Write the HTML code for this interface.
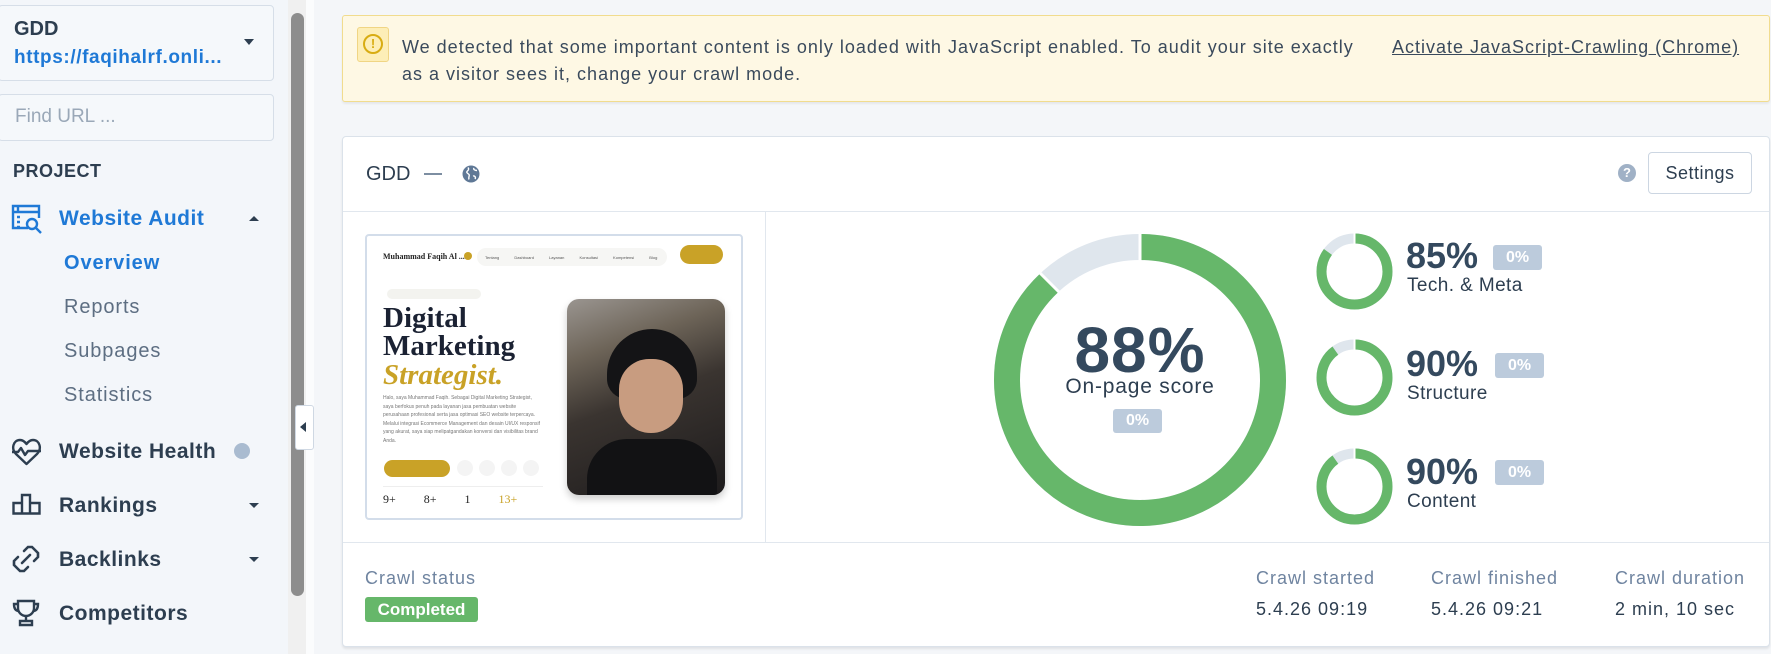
<!DOCTYPE html>
<html><head><meta charset="utf-8"><style>
*{box-sizing:border-box;margin:0;padding:0}
body{width:1771px;height:654px;overflow:hidden;background:#f4f6f9;font-family:"Liberation Sans",sans-serif;color:#2d3e50;position:relative}
.abs{position:absolute}
.side{left:0;top:0;width:288px;height:654px;background:#f3f6fa}
.nav{position:absolute;left:59px;font-size:21px;letter-spacing:0.5px;font-weight:bold;color:#2d3e50;white-space:nowrap}
.sub{position:absolute;left:64px;font-size:20px;letter-spacing:0.9px;color:#5d6e82}
.caret{position:absolute;width:0;height:0;border-left:5px solid transparent;border-right:5px solid transparent}
.card{left:342px;top:136px;width:1428px;height:511px;background:#fff;border:1px solid #dbe2ea;border-radius:4px;box-shadow:0 2px 2px rgba(0,0,0,.08)}
.badge{position:absolute;background:#bccbdc;color:#fff;font-weight:bold;border-radius:3px;text-align:center}
.lbl{position:absolute;font-size:18px;letter-spacing:1px;color:#6f84a0}
.val{position:absolute;font-size:18px;letter-spacing:1px;color:#2d3e50}
.pct{position:absolute;font-size:36px;font-weight:bold;color:#34495e}
.pl{position:absolute;font-size:19px;letter-spacing:0.4px}
</style></head><body>
<div class="abs side"></div>
<div class="abs" style="left:-2px;top:5px;width:276px;height:76px;border:1px solid #d6dee8;border-radius:4px;background:#f5f8fb"></div>
<div class="abs" style="left:14px;top:18px;font-size:20px;font-weight:bold">GDD</div>
<div class="abs" style="left:14px;top:47px;font-size:19px;letter-spacing:0.6px;font-weight:bold;color:#1f79d6">https://faqihalrf.onli...</div>
<div class="caret" style="left:244px;top:39px;border-top:6px solid #2d3e50"></div>
<div class="abs" style="left:-2px;top:94px;width:276px;height:47px;border:1px solid #d6dee8;border-radius:4px;background:#f5f8fb"></div>
<div class="abs" style="left:15px;top:106px;font-size:19px;color:#9aa8b8">Find URL ...</div>
<div class="abs" style="left:13px;top:161px;font-size:18px;letter-spacing:0.5px;font-weight:bold;color:#2d3e50">PROJECT</div>
<svg class="abs" style="left:11px;top:203px" width="32" height="32" viewBox="0 0 32 32" fill="none" stroke="#1f79d6" stroke-width="2.4"><path d="M17 25H2V3h26v12"/><path d="M2 9h26M7 3v6"/><path d="M6 14h3M6 19h3M6 24h3" /><circle cx="21" cy="21" r="5"/><path d="M25 25l5 5"/></svg>
<div class="nav" style="top:207px;color:#1f79d6">Website Audit</div>
<div class="caret" style="left:249px;top:216px;border-bottom:5px solid #2d3e50"></div>
<div class="sub" style="top:252px;color:#1f79d6;font-weight:bold">Overview</div>
<div class="sub" style="top:296px">Reports</div>
<div class="sub" style="top:340px">Subpages</div>
<div class="sub" style="top:384px">Statistics</div>
<svg class="abs" style="left:11px;top:437px" width="31" height="30" viewBox="0 0 31 30" fill="none" stroke="#2d3e50" stroke-width="2.4" stroke-linejoin="round"><path d="M5 17C0 12 2 3 9 3c3 0 5 2 6.5 4C17 5 19 3 22 3c7 0 9 9 4 14L15.5 27z"/><path d="M1 15h6l3-4 4 7 3-4h13"/></svg>
<div class="nav" style="top:440px">Website Health</div>
<div class="abs" style="left:234px;top:443px;width:16px;height:16px;border-radius:50%;background:#a9bbd0"></div>
<svg class="abs" style="left:12px;top:493px" width="29" height="22" viewBox="0 0 29 22" fill="none" stroke="#2d3e50" stroke-width="2.4"><path d="M1.5 20.5V10h8.5V20.5zM10 20.5V2h8v18.5zM18 20.5V10h9.5v10.5z"/></svg>
<div class="nav" style="top:494px">Rankings</div>
<div class="caret" style="left:249px;top:503px;border-top:5px solid #2d3e50"></div>
<svg class="abs" style="left:12px;top:545px" width="28" height="28" viewBox="0 0 28 28" fill="none" stroke="#2d3e50" stroke-width="2.6" stroke-linecap="round"><path d="M12 6l4-4 4 0 6 6v4l-4 4"/><path d="M16 22l-4 4H8L2 20v-4l4-4"/><path d="M10 18l8-8"/></svg>
<div class="nav" style="top:548px">Backlinks</div>
<div class="caret" style="left:249px;top:557px;border-top:5px solid #2d3e50"></div>
<svg class="abs" style="left:12px;top:599px" width="28" height="28" viewBox="0 0 28 28" fill="none" stroke="#2d3e50" stroke-width="2.4"><path d="M6 2h16v7a8 8 0 0 1-16 0z"/><path d="M6 5H2c0 5 2 7 5 7M22 5h4c0 5-2 7-5 7"/><path d="M14 17v5M8 26h12v-4H8z"/></svg>
<div class="nav" style="top:602px">Competitors</div>
<div class="abs" style="left:288px;top:0;width:18px;height:654px;background:#f0f0f0"></div>
<div class="abs" style="left:291px;top:13px;width:13px;height:583px;border-radius:7px;background:#8d8d8d"></div>
<div class="abs" style="left:306px;top:0;width:8px;height:654px;background:#fbfcfd"></div>
<div class="abs" style="left:295px;top:405px;width:19px;height:45px;background:#fff;border:1px solid #cfd8e3;border-radius:3px"></div>
<div class="caret" style="left:300px;top:422px;border:none;border-top:5px solid transparent;border-bottom:5px solid transparent;border-right:6px solid #2d3e50"></div>
<div class="abs" style="left:342px;top:15px;width:1428px;height:87px;background:#fef8e4;border:1px solid #f1dc8e;border-radius:3px;box-shadow:0 2px 2px rgba(0,0,0,.06)"></div>
<div class="abs" style="left:357px;top:27px;width:32px;height:35px;background:#fdeeb7;border:1px solid #f0d584;border-radius:3px"></div>
<div class="abs" style="left:363px;top:34px;width:20px;height:20px;border:2px solid #d8ac12;border-radius:50%;color:#d8ac12;font-size:13px;font-weight:bold;text-align:center;line-height:16px">!</div>
<div class="abs" style="left:402px;top:34px;font-size:18px;letter-spacing:1px;line-height:27px;color:#3a4a5c;white-space:nowrap">We detected that some important content is only loaded with JavaScript enabled. To audit your site exactly<br>as a visitor sees it, change your crawl mode.</div>
<div class="abs" style="left:1392px;top:34px;font-size:18px;letter-spacing:1px;line-height:27px;color:#3a4a5c;text-decoration:underline;white-space:nowrap">Activate JavaScript-Crawling (Chrome)</div>
<div class="abs card"></div>
<div class="abs" style="left:366px;top:163px;font-size:20px;color:#2d3e50">GDD</div>
<div class="abs" style="left:424px;top:173px;width:18px;height:2px;background:#7d8ea2"></div>
<svg class="abs" style="left:462px;top:165px" width="18" height="18" viewBox="0 0 18 18"><circle cx="9" cy="9" r="8.5" fill="#5f7896"/><path d="M6 2.5c1.5 2 0 3-1 4s1 2 2 3-1 3 0 5M12 3c-1 1.5 1 2.5 3 2.5M11 11c2-.5 3 1.5 2 3" stroke="#fff" stroke-width="1.4" fill="none"/></svg>
<div class="abs" style="left:1618px;top:164px;width:18px;height:18px;border-radius:50%;background:#a0b1c6;color:#fff;font-size:13px;font-weight:bold;text-align:center;line-height:18px">?</div>
<div class="abs" style="left:1648px;top:152px;width:104px;height:42px;border:1px solid #ccd6e2;border-radius:4px;font-size:18px;letter-spacing:0.5px;text-align:center;line-height:40px;color:#2d3e50">Settings</div>
<div class="abs" style="left:343px;top:211px;width:1426px;height:1px;background:#e1e7ee"></div>
<div class="abs" style="left:765px;top:212px;width:1px;height:330px;background:#e1e7ee"></div>
<div class="abs" style="left:343px;top:542px;width:1426px;height:1px;background:#e1e7ee"></div>
<div class="abs" style="left:365px;top:234px;width:378px;height:286px;border:2px solid #d3ddea;border-radius:4px;background:#fff;overflow:hidden">
  <div class="abs" style="left:16px;top:16px;font-family:'Liberation Serif',serif;font-size:8px;font-weight:bold;color:#222">Muhammad Faqih Al ...</div>
  <div class="abs" style="left:97px;top:16px;width:8px;height:8px;border-radius:50%;background:#c9a227"></div>
  <div class="abs" style="left:110px;top:12px;width:190px;height:18px;border-radius:9px;background:#f6f6f4;font-size:4px;color:#555;padding:7px 0 0 8px;word-spacing:14px">Tentang Dashboard Layanan Konsultasi Kompetensi Blog</div>
  <div class="abs" style="left:313px;top:9px;width:43px;height:19px;border-radius:10px;background:#c9a227"></div>
  <div class="abs" style="left:20px;top:53px;width:94px;height:10px;border-radius:5px;background:#f3f3ef"></div>
  <div class="abs" style="left:16px;top:68px;font-family:'Liberation Serif',serif;font-size:29px;font-weight:bold;line-height:28px;color:#1b2233">Digital<br>Marketing</div>
  <div class="abs" style="left:16px;top:123px;font-family:'Liberation Serif',serif;font-size:29px;font-style:italic;font-weight:bold;color:#c9a227">Strategist.</div>
  <div class="abs" style="left:16px;top:158px;width:160px;font-size:5px;line-height:8.5px;color:#777">Halo, saya Muhammad Faqih. Sebagai Digital Marketing Strategist, saya berfokus penuh pada layanan jasa pembuatan website perusahaan profesional serta jasa optimasi SEO website terpercaya. Melalui integrasi Ecommerce Management dan desain UI/UX responsif yang akurat, saya siap melipatgandakan konversi dan visibilitas brand Anda.</div>
  <div class="abs" style="left:17px;top:224px;width:66px;height:17px;border-radius:9px;background:#c9a227"></div>
  <div class="abs" style="left:90px;top:224px;width:16px;height:16px;border-radius:50%;background:#f4f4f4"></div>
  <div class="abs" style="left:112px;top:224px;width:16px;height:16px;border-radius:50%;background:#f4f4f4"></div>
  <div class="abs" style="left:134px;top:224px;width:16px;height:16px;border-radius:50%;background:#f4f4f4"></div>
  <div class="abs" style="left:156px;top:224px;width:16px;height:16px;border-radius:50%;background:#f4f4f4"></div>
  <div class="abs" style="left:16px;top:250px;width:160px;height:1px;background:#eee"></div>
  <div class="abs" style="left:16px;top:256px;font-family:'Liberation Serif',serif;font-size:12px;color:#222;word-spacing:25px">9+ 8+ 1 <span style="color:#c9a227">13+</span></div>
  <div class="abs" style="left:200px;top:63px;width:158px;height:196px;border-radius:12px;background:linear-gradient(160deg,#9a9590 0%,#6d6458 25%,#3a3430 50%,#1d1b1c 100%);box-shadow:0 4px 8px rgba(0,0,0,.2);overflow:hidden">
    <div class="abs" style="left:40px;top:30px;width:90px;height:70px;border-radius:45px 45px 20px 20px;background:#141416"></div>
    <div class="abs" style="left:52px;top:60px;width:64px;height:74px;border-radius:30px 30px 32px 32px;background:#c89c80"></div>
    <div class="abs" style="left:20px;top:140px;width:130px;height:70px;border-radius:40px 40px 0 0;background:#121214"></div>
  </div>
</div>
<svg class="abs" style="left:990px;top:230px" width="300" height="300" viewBox="0 0 300 300">
  <g transform="rotate(-90 150 150)">
    <circle cx="150" cy="150" r="133" fill="none" stroke="#dfe6ed" stroke-width="26"/>
    <circle cx="150" cy="150" r="133" fill="none" stroke="#66b76a" stroke-width="26" stroke-dasharray="735.4 1000"/>
  </g>
  <line x1="150" y1="2" x2="150" y2="32" stroke="#fff" stroke-width="3"/>
  <line x1="48" y1="41" x2="70" y2="63" stroke="#fff" stroke-width="3"/>
</svg>
<div class="abs" style="left:1010px;top:313px;width:260px;text-align:center;font-size:64px;letter-spacing:1px;font-weight:bold;color:#34495e">88%</div>
<div class="abs" style="left:1010px;top:375px;width:260px;text-align:center;font-size:21px;letter-spacing:0.8px;color:#2d3e50">On-page score</div>
<div class="badge" style="left:1113px;top:409px;width:49px;height:24px;font-size:16px;line-height:24px">0%</div>
<svg class="abs" style="left:1316px;top:233px" width="77" height="77" viewBox="0 0 77 77"><g transform="rotate(-90 38.5 38.5)"><circle cx="38.5" cy="38.5" r="33" fill="none" stroke="#dfe6ed" stroke-width="10"/><circle cx="38.5" cy="38.5" r="33" fill="none" stroke="#66b76a" stroke-width="10" stroke-dasharray="176.2 300"/></g><line x1="38.5" y1="0" x2="38.5" y2="12" stroke="#fff" stroke-width="2"/></svg>
<svg class="abs" style="left:1316px;top:339px" width="77" height="77" viewBox="0 0 77 77"><g transform="rotate(-90 38.5 38.5)"><circle cx="38.5" cy="38.5" r="33" fill="none" stroke="#dfe6ed" stroke-width="10"/><circle cx="38.5" cy="38.5" r="33" fill="none" stroke="#66b76a" stroke-width="10" stroke-dasharray="186.6 300"/></g><line x1="38.5" y1="0" x2="38.5" y2="12" stroke="#fff" stroke-width="2"/></svg>
<svg class="abs" style="left:1316px;top:448px" width="77" height="77" viewBox="0 0 77 77"><g transform="rotate(-90 38.5 38.5)"><circle cx="38.5" cy="38.5" r="33" fill="none" stroke="#dfe6ed" stroke-width="10"/><circle cx="38.5" cy="38.5" r="33" fill="none" stroke="#66b76a" stroke-width="10" stroke-dasharray="186.6 300"/></g><line x1="38.5" y1="0" x2="38.5" y2="12" stroke="#fff" stroke-width="2"/></svg>
<div class="pct" style="left:1406px;top:235px">85%</div>
<div class="badge" style="left:1493px;top:245px;width:49px;height:25px;font-size:16px;line-height:25px">0%</div>
<div class="pl" style="left:1407px;top:275px">Tech. &amp; Meta</div>
<div class="pct" style="left:1406px;top:343px">90%</div>
<div class="badge" style="left:1495px;top:353px;width:49px;height:25px;font-size:16px;line-height:25px">0%</div>
<div class="pl" style="left:1407px;top:383px">Structure</div>
<div class="pct" style="left:1406px;top:451px">90%</div>
<div class="badge" style="left:1495px;top:460px;width:49px;height:25px;font-size:16px;line-height:25px">0%</div>
<div class="pl" style="left:1407px;top:491px">Content</div>
<div class="lbl" style="left:365px;top:568px">Crawl status</div>
<div class="abs" style="left:365px;top:597px;width:113px;height:25px;background:#66b76a;border-radius:3px;color:#fff;font-weight:bold;font-size:17px;text-align:center;line-height:25px">Completed</div>
<div class="lbl" style="left:1256px;top:568px">Crawl started</div>
<div class="val" style="left:1256px;top:599px">5.4.26 09:19</div>
<div class="lbl" style="left:1431px;top:568px">Crawl finished</div>
<div class="val" style="left:1431px;top:599px">5.4.26 09:21</div>
<div class="lbl" style="left:1615px;top:568px">Crawl duration</div>
<div class="val" style="left:1615px;top:599px">2 min, 10 sec</div>
</body></html>
